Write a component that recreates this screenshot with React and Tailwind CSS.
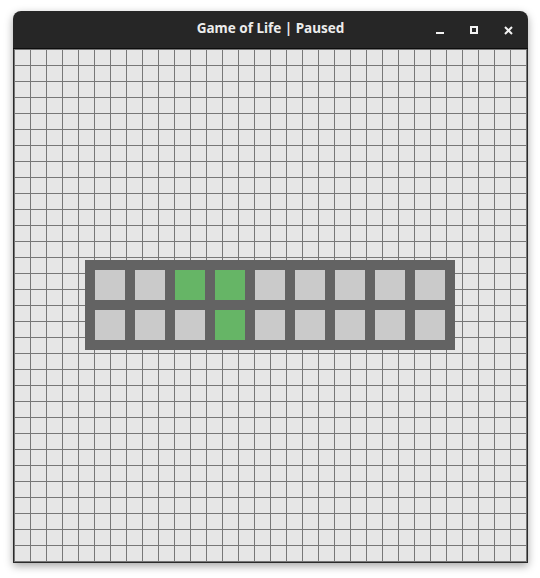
const ROWS = 32;
const COLS = 32;

// live cells in the little panel: [row, col]
const alive = { "0-2": true, "0-3": true, "1-3": true };

function TitleButtons() {
  return (
    <div className="absolute right-[8px] top-[7px] flex gap-[10px]">
      <div className="w-[24px] h-[24px] flex items-center justify-center">
        <svg width="8" height="8" viewBox="0 0 8 8">
          <rect x="0" y="6" width="8" height="2" fill="#f2f2f2" />
        </svg>
      </div>
      <div className="w-[24px] h-[24px] flex items-center justify-center">
        <svg width="8" height="8" viewBox="0 0 8 8">
          <rect x="1" y="1" width="6" height="6" fill="none" stroke="#f2f2f2" strokeWidth="2" />
        </svg>
      </div>
      <div className="w-[24px] h-[24px] flex items-center justify-center">
        <svg width="9" height="9" viewBox="0 0 9 9">
          <path d="M1 1 L8 8 M8 1 L1 8" stroke="#f2f2f2" strokeWidth="2" />
        </svg>
      </div>
    </div>
  );
}

export default function App() {
  const cells = [];
  for (let i = 0; i < ROWS * COLS; i++) {
    cells.push(<div key={i} className="bg-[#e6e6e6]" />);
  }

  const panelCells = [];
  for (let r = 0; r < 2; r++) {
    for (let c = 0; c < 9; c++) {
      const on = alive[`${r}-${c}`];
      panelCells.push(
        <div
          key={`${r}-${c}`}
          className={on ? "w-[30px] h-[30px] bg-[#66b566]" : "w-[30px] h-[30px] bg-[#cacaca]"}
        />
      );
    }
  }

  return (
    <div className="w-[540px] h-[578px] bg-white pt-[11px] pl-[13px]">
      <div className="w-[515px] rounded-t-[8px] shadow-[0_3px_9px_rgba(0,0,0,0.35)]">
        <div className="relative h-[38px] bg-[#262626] rounded-t-[8px] border-b border-[#0d0d0d] flex items-center justify-center">
          <span className="font-['Noto_Sans',sans-serif] font-bold text-[13.5px] text-[#ececec] leading-none -mt-[1px]">
            Game of Life | Paused
          </span>
          <TitleButtons />
        </div>
        <div className="relative border-x border-b border-[#2b2b2b]">
          <div className="grid grid-cols-[repeat(32,15px)] grid-rows-[repeat(32,15px)] gap-px p-px bg-[#777777]">
            {cells}
          </div>
          <div className="absolute left-[71px] top-[211px] bg-[#636363] p-[10px] grid grid-cols-[repeat(9,30px)] gap-[10px]">
            {panelCells}
          </div>
        </div>
      </div>
    </div>
  );
}
